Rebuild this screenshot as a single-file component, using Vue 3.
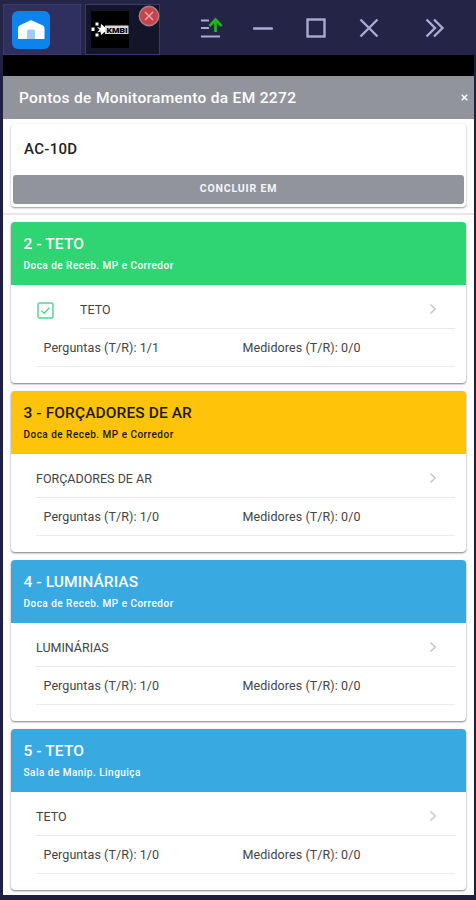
<template>
  <div class="window">
    <div class="topbar">
      <div class="tab home-tab">
        <svg width="38" height="38" viewBox="0 0 38 38">
          <rect width="38" height="38" rx="6" fill="#0b84ee" />
          <path d="M6 17 Q6 15.500 7.500 14.500 L18 9.500 Q19 9 20 9.500 L31 14.500 Q32.500 15.500 32.500 17 V28 H6 Z" fill="#fff" />
          <path d="M15 28 V20 Q15 18.500 16.500 18.500 H21.500 Q23 18.500 23 20 V28 Z" fill="#a5c9ef" />
        </svg>
      </div>
      <div class="tab app-tab">
        <svg width="38" height="37" viewBox="0 0 38 37">
          <rect width="38" height="37" fill="#000" />
          <g fill="#fff">
            <rect x="0.500" y="16.500" width="3" height="3.500" />
            <rect x="4.500" y="11.500" width="3" height="3" />
            <rect x="4.500" y="22.500" width="3" height="3" />
            <path d="M6 16 L9.500 17 L10 13 L15 17 V20 L10 24 L9.500 20.500 L6 21.500 L8.500 18.700 Z" />
            <rect x="14" y="14.500" width="23.500" height="8.500" fill="#d8d8d8" />
          </g>
          <text x="15.500" y="22" textLength="21" lengthAdjust="spacingAndGlyphs" class="logo-text">KMBI</text>
        </svg>
        <svg class="close-badge" width="22" height="22" viewBox="0 0 22 22">
          <circle cx="11" cy="11" r="9.700" fill="#c9434c" stroke="#a08590" stroke-width="1.400" />
          <path d="M7 7 L15 15 M15 7 L7 15" stroke="#e3aeb6" stroke-width="1.400" />
        </svg>
      </div>
      <div class="controls">
        <svg width="24" height="22" viewBox="0 0 24 22" fill="none">
          <path d="M1 3.500 H9 M1 11 H9 M1 19.500 H20" stroke="#aaaad4" stroke-width="2.200" />
          <path d="M15.500 15 V3 M9.500 9 L15.500 2.500 L21.500 9" stroke="#1fb51f" stroke-width="2.700" />
        </svg>
        <svg width="20" height="20" viewBox="0 0 20 20" fill="none">
          <path d="M1 10.500 H19" stroke="#aaaad4" stroke-width="2.400" stroke-linecap="round" />
        </svg>
        <svg width="20" height="20" viewBox="0 0 20 20" fill="none">
          <rect x="1.500" y="1.500" width="17" height="17" stroke="#aaaad4" stroke-width="2.400" />
        </svg>
        <svg width="20" height="20" viewBox="0 0 20 20" fill="none">
          <path d="M1.500 1.500 L18.500 18.500 M18.500 1.500 L1.500 18.500" stroke="#aaaad4" stroke-width="2.400" />
        </svg>
        <svg width="20" height="20" viewBox="0 0 20 20" fill="none">
          <path d="M1.500 1.500 L10 10 L1.500 18.500 M9 1.500 L17.500 10 L9 18.500" stroke="#aaaad4" stroke-width="2.400" />
        </svg>
      </div>
    </div>

    <div class="screen">
      <div class="statusbar"></div>
      <div class="header">
        <span class="title">Pontos de Monitoramento da EM 2272</span>
        <button class="close">
          <svg width="7" height="7" viewBox="0 0 7 7">
            <path d="M0.700 0.700 L6.300 6.300 M6.300 0.700 L0.700 6.300" stroke="#fff" stroke-width="1.500" />
          </svg>
        </button>
      </div>

      <div class="top-section">
        <div class="equip-card">
          <div class="equip-name">AC-10D</div>
          <button class="finish-button">CONCLUIR EM</button>
        </div>
      </div>

      <div class="list">
        <div v-for="ponto in pontos" :key="ponto.id" class="card">
          <div class="card-header" :class="ponto.status">
            <div class="card-title">{{ ponto.id }} - {{ ponto.nome }}</div>
            <div class="card-subtitle">{{ ponto.local }}</div>
          </div>
          <div class="item">
            <svg v-if="ponto.checked" class="check" width="17" height="17" viewBox="0 0 17 17" fill="none">
              <rect x="1" y="1" width="15" height="15" rx="1.500" stroke="#5bd493" stroke-width="1.500" />
              <path d="M4.300 8.500 L7.200 11.300 L12.500 5.500" stroke="#5bd493" stroke-width="1.300" />
            </svg>
            <div class="item-inner">
              <span>{{ ponto.nome }}</span>
              <svg width="8" height="12" viewBox="0 0 8 12" fill="none">
                <path d="M1.500 1.500 L6.200 6 L1.500 10.500" stroke="#c8c8c8" stroke-width="1.600" />
              </svg>
            </div>
          </div>
          <div class="counts">
            <span>Perguntas (T/R): {{ ponto.perguntas }}</span>
            <span>Medidores (T/R): {{ ponto.medidores }}</span>
          </div>
        </div>
      </div>
    </div>
  </div>
</template>


<script setup>
import { ref } from "vue";

const pontos = ref([
  { id: 2, nome: "TETO", local: "Doca de Receb. MP e Corredor", status: "done", checked: true, perguntas: "1/1", medidores: "0/0" },
  { id: 3, nome: "FORÇADORES DE AR", local: "Doca de Receb. MP e Corredor", status: "pending", checked: false, perguntas: "1/0", medidores: "0/0" },
  { id: 4, nome: "LUMINÁRIAS", local: "Doca de Receb. MP e Corredor", status: "open", checked: false, perguntas: "1/0", medidores: "0/0" },
  { id: 5, nome: "TETO", local: "Sala de Manip. Linguiça", status: "open", checked: false, perguntas: "1/0", medidores: "0/0" },
]);
</script>


<style>
body {
  background: #1c1c3a;
}
</style>

<style scoped>
.window {
  width: 476px;
  height: 900px;
  box-sizing: border-box;
  overflow: hidden;
  background: #1f1f42;
  font-family: Roboto, "Liberation Sans", sans-serif;
}

svg {
  display: block;
  flex: none;
}

button {
  border: none;
  padding: 0;
  font-family: inherit;
  cursor: pointer;
}

.topbar {
  height: 55px;
  box-sizing: border-box;
  padding: 4px 0 0 3px;
  display: flex;
  background: #232446;
}

.tab {
  box-sizing: border-box;
  height: 51px;
  border: 1px solid #3a3a68;
}

.home-tab {
  width: 78px;
  padding: 6px 8px;
  background: #2f3060;
}

.app-tab {
  position: relative;
  width: 75px;
  margin-left: 4px;
  padding: 6px 5px;
  background: #14152b;
}

.logo-text {
  font-size: 8px;
  font-weight: 900;
  fill: #000;
}

.close-badge {
  position: absolute;
  top: 0;
  right: -1px;
}

.controls {
  display: grid;
  grid-template-columns: 24px 20px 20px 20px 20px;
  column-gap: 33px;
  height: 48px;
  margin-left: 40px;
  align-items: center;
}

.controls svg {
  margin-left: -4px;
}

.controls svg:first-child {
  margin-left: 0;
}

.controls svg:last-child {
  margin-left: 9px;
}

.screen {
  height: 840px;
  box-sizing: border-box;
  margin: 0 2px 0 3px;
  background: #fdfdfd;
}

.statusbar {
  height: 21px;
  background: #000;
}

.header {
  height: 43px;
  display: flex;
  align-items: center;
  justify-content: space-between;
  padding: 0 6px 0 16px;
  background: #92949c;
  color: #fff;
}

.title {
  font-size: 15.5px;
  font-weight: 500;
  letter-spacing: 0.32px;
}

.close {
  background: none;
}

.top-section {
  height: 96px;
  box-sizing: border-box;
  padding: 5px 8px 0;
  border-bottom: 2px solid #e8e8e8;
}

.equip-card {
  height: 83px;
  box-sizing: border-box;
  padding: 0 2px;
  border-radius: 4px;
  background: #fff;
  box-shadow: 0 1px 2px rgba(0, 0, 0, 0.4);
}

.equip-name {
  height: 51px;
  line-height: 51px;
  padding-left: 11px;
  color: #222;
  font-size: 15px;
  font-weight: 500;
  letter-spacing: 0.3px;
}

.finish-button {
  display: block;
  width: 100%;
  height: 29px;
  border-radius: 3px;
  background: #92949c;
  color: #f4f5f8;
  font-size: 10.5px;
  font-weight: 700;
  letter-spacing: 0.85px;
  padding-bottom: 2px;
}

.list {
  display: flex;
  flex-direction: column;
  gap: 8px;
  padding: 7px 8px 0;
}

.card {
  height: 161px;
  border-radius: 4px;
  overflow: hidden;
  background: #fff;
  box-shadow: 0 1px 2px rgba(0, 0, 0, 0.5);
}

.card-header {
  height: 63px;
  box-sizing: border-box;
  padding: 12px 13px 0 12.5px;
  color: #fff;
}

.done {
  background: #2fd573;
}

.pending {
  background: #ffc409;
  color: #1d1700;
}

.open {
  background: #38aae1;
}

.card-title {
  height: 20px;
  line-height: 20px;
  font-size: 15.5px;
  font-weight: 500;
  letter-spacing: 0.1px;
}

.card-subtitle {
  height: 22px;
  line-height: 24px;
  font-size: 10px;
  font-weight: 500;
  letter-spacing: 0.48px;
}

.item {
  display: flex;
  align-items: center;
  height: 44px;
  margin: 0 11px 0 25px;
  color: #444;
  font-size: 12.5px;
}

.check {
  margin-right: 26px;
  margin-left: 1px;
  margin-top: 6px;
}

.item-inner {
  flex: 1;
  height: 44px;
  box-sizing: border-box;
  display: flex;
  align-items: center;
  justify-content: space-between;
  padding-top: 5px;
  padding-right: 18px;
  border-bottom: 1px solid #e8e8e8;
}

.counts {
  display: grid;
  grid-template-columns: 199px 1fr;
  align-items: center;
  height: 38px;
  box-sizing: border-box;
  margin: 0 11px 0 25px;
  padding-left: 7.5px;
  border-bottom: 1px solid #ececec;
  color: #444;
  font-size: 12.5px;
  letter-spacing: 0.08px;
}
</style>
